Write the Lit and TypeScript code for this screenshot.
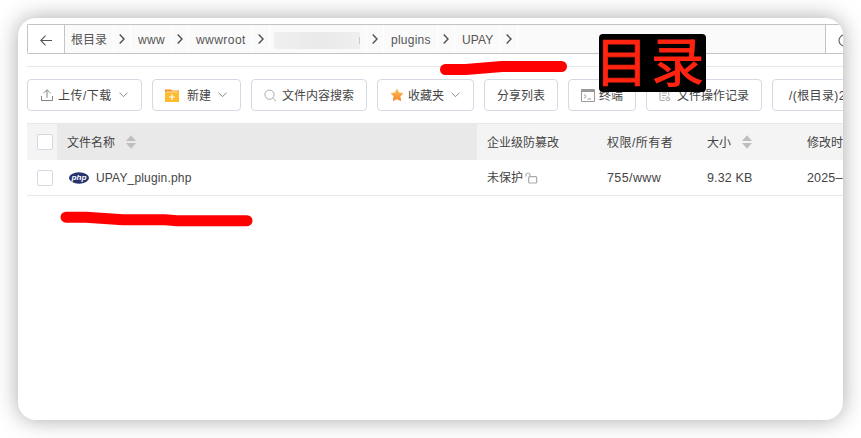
import { LitElement, html, css, svg, nothing } from "lit";
import { customElement, property } from "lit/decorators.js";
import { styleMap } from "lit/directives/style-map.js";

const icons: Record<string, unknown> = {
  upload: svg`<svg width="14" height="14" viewBox="0 0 14 14" fill="none" stroke="#858585"><path d="M1.5 8v4.5h11V8M7 9.8V2M3.5 5.2 7 1.7l3.5 3.5"/></svg>`,
  folder: svg`<svg width="14" height="13" viewBox="0 0 14 13"><path d="M0 .5h6l1 1h7V4H0z" fill="#f98d1b"/><path d="M0 3h14v10H0z" fill="#fdbb2d"/><path d="M.8 2.4h12.4v.8H.8z" fill="#fff3d8"/><path d="M7 5v6M4 8h6" stroke="#fff" stroke-width="1.1"/></svg>`,
  search: svg`<svg width="13" height="13" viewBox="0 0 13 13" fill="none" stroke="#aaa"><circle cx="5.5" cy="5.7" r="4.6"/><path d="m8.8 9.2 3.2 3"/></svg>`,
  star: svg`<svg width="14" height="14" viewBox="0 0 14 14"><defs><linearGradient id="g" x1="0" y1="0" x2="0" y2="1"><stop stop-color="#fbc259"/><stop offset="1" stop-color="#f98326"/></linearGradient></defs><path d="M7 1.2 8.8 5l4 .5-2.9 2.8.7 4.2L7 10.6l-3.6 1.9.7-4.2L1.2 5.5l4-.5z" fill="url(#g)" stroke="url(#g)" stroke-linejoin="round"/></svg>`,
  terminal: svg`<svg width="14" height="13" viewBox="0 0 14 13" fill="none" stroke="#999"><path d="M.5.5h13v12H.5z"/><path d="M0 1.9h14" stroke-width="2.2"/><path d="m3 5.5 2.2 1.9L3 9.3M6.5 10h3.5"/></svg>`,
  log: svg`<svg width="12" height="13" viewBox="0 0 12 13" fill="none" stroke="#aaa"><path d="M5.8 11.5H1V1h8.800v5.500M3 4h5M3 6.500h4M3 9h2.500"/><circle cx="8.800" cy="9.800" r="1.900"/><path d="M8.800 9v1h.8" stroke-width=".7"/></svg>`,
};

const chevron = svg`<svg class="chev" width="9" height="6" viewBox="0 0 9 6" fill="none" stroke="#888"><path d="m.5.7 4 4 4-4"/></svg>`;
const sorter = html`<svg class="sorter" width="10" height="14" viewBox="0 0 10 14" fill="#bfbfbf"><path d="M5 .3 10 6H0zM5 13.7 0 8h10z"/></svg>`;

@customElement("path-bar")
export class PathBar extends LitElement {
  static styles = css`
    :host { display: flex; height: 30px; box-sizing: border-box; border: 1px solid #c4c4c4; border-right: 0; border-radius: 2px 0 0 2px; background: #fafafa; }
    .back { width: 37px; box-sizing: border-box; border-right: 1px solid #c4c4c4; background: #fff; display: grid; place-items: center; padding-top: 2px; }
    .crumb { box-sizing: border-box; padding-left: 6px; line-height: 31px; height: 28px; white-space: nowrap; color: #555; }
    .sep { width: 18px; box-sizing: border-box; border: solid #fff; border-width: 0 1px; display: grid; place-items: center; }
    .redacted { height: 17px; margin: 7px 0 0 3px; width: 86px; background: linear-gradient(90deg, #f0f0f0, #e9e9e9 50%, #efefef); position: relative; }
    .redacted::after { content: ""; position: absolute; right: 0; top: 5px; width: 1px; height: 7px; background: #c9c9c9; }
    .refresh { margin-left: auto; width: 18px; box-sizing: border-box; border-left: 1px solid #c4c4c4; background: #fff; overflow: hidden; padding: 9px 0 0 12px; }
    svg { display: block; }
  `;
  crumbs = [
    { t: "根目录", w: 48, s: 0 }, { t: "www", w: 40, s: 0.35 }, { t: "wwwroot", w: 63, s: 0.45 },
    { t: "", w: 96, s: 0 }, { t: "plugins", w: 53, s: 0.25 }, { t: "UPAY", w: 45, s: 0.15 },
  ];
  render() {
    return html`
      <div class="back"><svg width="12" height="11" viewBox="0 0 12 11" fill="none" stroke="#555" stroke-width="1.1"><path d="M5.5.7.8 5.5l4.7 4.8M.8 5.5H12"/></svg></div>
      ${this.crumbs.map((c, i) => html`
        <div class="crumb" style=${styleMap({ width: c.w + "px", letterSpacing: c.s + "px", paddingLeft: c.t ? (i ? "7px" : "6px") : "1px" })}>
          ${c.t ? c.t : html`<div class="redacted"></div>`}
        </div>
        <div class="sep"><svg width="6" height="10" viewBox="0 0 6 10" fill="none" stroke="#505050" stroke-width="1.4"><path d="m.7.6 4.3 4.4L.7 9.4"/></svg></div>`)}
      <div class="refresh"><svg width="13" height="13" viewBox="0 0 13 13" fill="none" stroke="#666" stroke-width="1.2"><circle cx="6.5" cy="6.5" r="5.5"/></svg></div>`;
  }
}

@customElement("tool-button")
export class ToolButton extends LitElement {
  static styles = css`
    :host { display: flex; flex: none; align-items: center; height: 32px; box-sizing: border-box; border: 1px solid #d6d9e3; border-radius: 4px; padding: 0 12px; color: #444; white-space: nowrap; background: #fff; }
    svg { display: block; flex: none; }
    span { padding-bottom: 2px; }
    .chev { margin: 0 0 0 7px; }
  `;
  @property() label = "";
  @property() icon = "";
  @property({ type: Number }) gap = 5;
  @property({ type: Boolean }) menu = false;
  render() {
    return html`${this.icon ? icons[this.icon] : nothing}<span style=${styleMap({ marginLeft: this.icon ? this.gap + "px" : "0" })}>${this.label}</span>${this.menu ? chevron : nothing}`;
  }
}

@customElement("file-table")
export class FileTable extends LitElement {
  static styles = css`
    :host { display: block; color: #444; }
    .row { display: grid; grid-template-columns: 30px 420px 120px 100px 100px 46px; height: 35px; border-bottom: 1px solid #e8e8e8; }
    .head { height: 36px; background: #f4f4f4; border-top: 1px solid #e8e8e8; border-bottom: 0; }
    .cell { display: flex; align-items: center; padding-left: 10px; white-space: nowrap; overflow: hidden; }
    .head .name { background: #e9e9e9; }
    .label { padding-bottom: 2px; }
    .owner { letter-spacing: .5px; }
    .box { width: 16px; height: 16px; box-sizing: border-box; border: 1px solid #d6d9e3; border-radius: 2px; background: #fff; flex: none; }
    .sorter { margin-left: 11px; }
    .file { margin-left: 7px; letter-spacing: .17px; }
    .php { margin-left: 2px; }
    .lock { margin: 1px 0 0 2px; }
    .data { font-size: 12.5px; letter-spacing: .15px; }
    .mode { letter-spacing: .4px; }
  `;
  render() {
    return html`
      <div class="row head">
        <div class="cell"><span class="box"></span></div>
        <div class="cell name"><span class="label">文件名称</span>${sorter}</div>
        <div class="cell"><span class="label">企业级防篡改</span></div>
        <div class="cell"><span class="label owner">权限/所有者</span></div>
        <div class="cell"><span class="label">大小</span>${sorter}</div>
        <div class="cell"><span class="label">修改时间</span></div>
      </div>
      <div class="row">
        <div class="cell"><span class="box"></span></div>
        <div class="cell"><svg class="php" width="20" height="12" viewBox="0 0 20 12"><ellipse cx="10" cy="6" rx="10" ry="5.7" fill="#26336f"/><text x="10" y="8" text-anchor="middle" textLength="15" lengthAdjust="spacingAndGlyphs" font-family="Liberation Sans, sans-serif" font-size="8" font-weight="bold" font-style="italic" fill="#fff">php</text></svg><span class="file">UPAY_plugin.php</span></div>
        <div class="cell"><span class="label">未保护</span><svg class="lock" width="13" height="12" viewBox="0 0 13 12" fill="none" stroke="#aaa" stroke-width="1.2"><rect x="3.7" y="4.7" width="8" height="6.3" rx="1"/><path d="M1 4.5V3a2 2 0 0 1 4 0v1.7"/></svg></div>
        <div class="cell data mode">755/www</div>
        <div class="cell data">9.32 KB</div>
        <div class="cell data">2025–08</div>
      </div>`;
  }
}

@customElement("app-root")
export class AppRoot extends LitElement {
  static styles = css`
    :host { display: block; box-sizing: border-box; width: 861px; height: 438px; padding: 18px; background: #fff; position: relative; overflow: hidden; font: 12px "Liberation Sans", "Noto Sans CJK SC", sans-serif; }
    .card { width: 825px; height: 402px; border-radius: 18px; box-shadow: 0 0 22px rgba(0, 0, 0, .34); background: #fff; overflow: hidden; box-sizing: border-box; padding: 6px 0 0 9px; }
    .rule { height: 1px; background: #e8e8e8; margin: 12px 0; }
    .tools { display: flex; gap: 10px; margin-bottom: 12px; }
    .upload { width: 115px; letter-spacing: .5px; }
    .create { width: 89px; }
    .search { width: 116px; }
    .star { width: 97px; }
    .share { width: 74px; }
    .term { width: 68px; }
    .log { width: 116px; }
    .disk { width: 130px; padding-left: 16px; letter-spacing: .4px; }
    .marks { position: absolute; left: 0; top: 0; }
    .tag { position: absolute; left: 599px; top: 34px; width: 107px; height: 58px; border-radius: 4px; background: #000; color: #ff2410; font: 400 53px/51px "Noto Sans CJK SC", sans-serif; -webkit-text-stroke: .9px #ff2410; letter-spacing: 3px; text-indent: -4px; white-space: nowrap; }
  `;
  render() {
    return html`
      <div class="card">
        <path-bar></path-bar>
        <div class="rule"></div>
        <div class="tools">
          <tool-button class="upload" icon="upload" label="上传/下载" .gap=${4} menu></tool-button>
          <tool-button class="create" icon="folder" label="新建" .gap=${8} menu></tool-button>
          <tool-button class="search" icon="search" label="文件内容搜索" .gap=${5}></tool-button>
          <tool-button class="star" icon="star" label="收藏夹" .gap=${4} menu></tool-button>
          <tool-button class="share" label="分享列表"></tool-button>
          <tool-button class="term" icon="terminal" label="终端" .gap=${4}></tool-button>
          <tool-button class="log" icon="log" label="文件操作记录" .gap=${6}></tool-button>
          <tool-button class="disk" label="/(根目录)26G"></tool-button>
        </div>
        <file-table></file-table>
      </div>
      <svg class="marks" width="861" height="438" fill="none" stroke="#f00" stroke-width="11" stroke-linecap="round" stroke-linejoin="round">
        <path d="M445.5 69.500h20L502 66.500h59.500"/>
        <path d="M66 217.200h20l37 2.500h42l12 1H247"/>
      </svg>
      <div class="tag">目录</div>`;
  }
}
